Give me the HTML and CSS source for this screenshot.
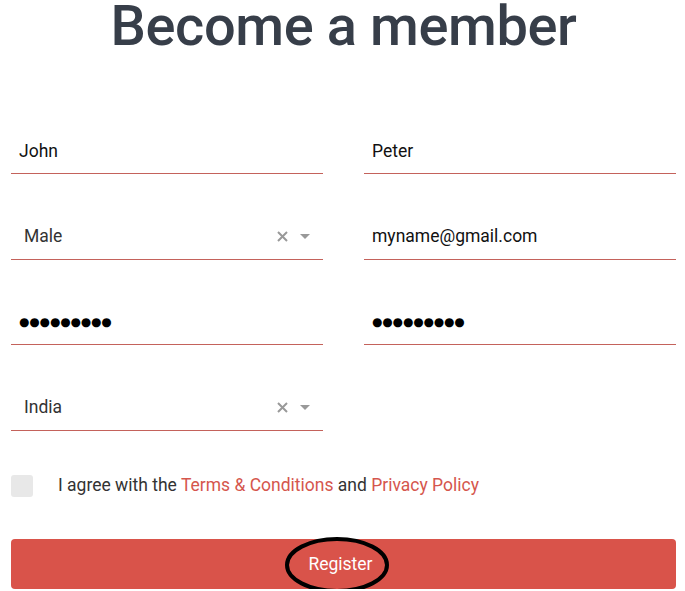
FILE: index.html
```html
<!DOCTYPE html>
<html lang="en">
    <head>
        <meta charset="UTF-8" />
        <meta name="viewport" content="width=device-width, initial-scale=1.0" />
        <title>Become a member</title>
        <link rel="stylesheet" href="styles.css">
    </head>
    <body>
        <div class="container">
            <h1>Become a member</h1>

            <form class="signup">
                <div class="fields">
                    <div class="field">
                        <input type="text" value="John" />
                    </div>
                    <div class="field">
                        <input type="text" value="Peter" />
                    </div>

                    <div class="field select">
                        <span class="select-value">Male</span>
                        <span class="select-clear">
                            <svg width="11" height="11" viewBox="0 0 11 11">
                                <path d="M1 1 L10 10 M10 1 L1 10" />
                            </svg>
                        </span>
                        <span class="select-caret"></span>
                    </div>
                    <div class="field">
                        <input type="email" value="myname@gmail.com" />
                    </div>

                    <div class="field">
                        <input type="text" class="secret" value="●●●●●●●●●" />
                    </div>
                    <div class="field">
                        <input type="text" class="secret" value="●●●●●●●●●" />
                    </div>

                    <div class="field select">
                        <span class="select-value">India</span>
                        <span class="select-clear">
                            <svg width="11" height="11" viewBox="0 0 11 11">
                                <path d="M1 1 L10 10 M10 1 L1 10" />
                            </svg>
                        </span>
                        <span class="select-caret"></span>
                    </div>
                </div>

                <label class="agree">
                    <span class="checkbox"></span>
                    <span class="agree-text">I agree with the <a href="#">Terms &amp; Conditions</a> and <a href="#">Privacy Policy</a></span>
                </label>

                <button type="submit" class="register">
                    <span class="register-label">
                        Register
                        <svg class="circled" width="108" height="60" viewBox="0 0 108 60">
                            <ellipse cx="54" cy="30" rx="50" ry="26" />
                        </svg>
                    </span>
                </button>
            </form>
        </div>
    </body>
</html>
```

FILE: styles.css
```css
* {
    box-sizing: border-box;
}
body {
    font-family: Roboto, "Noto Sans", sans-serif;
    margin: 0;
    background-color: #fff;
    color: #333;
    overflow: hidden;
}
.container {
    margin: 0 9px 0 11px;
}
h1 {
    margin: -2px 0 0;
    font-size: 56px;
    line-height: 56px;
    font-weight: 500;
    letter-spacing: -0.4px;
    text-align: center;
    color: #373e49;
}
.signup {
    margin-top: 76px;
}
.fields {
    display: grid;
    grid-template-columns: 1fr 1fr;
    column-gap: 41px;
    row-gap: 41.5px;
}
.field {
    height: 44px;
    padding-bottom: 2px;
    border-bottom: 1px solid #c4625b;
    display: flex;
    align-items: center;
}
.field input {
    width: 100%;
    border: none;
    outline: none;
    padding: 0 8px;
    font-family: inherit;
    font-size: 17.5px;
    color: #111;
    background: transparent;
}
.field input.secret {
    font-family: "DejaVu Sans", sans-serif;
    font-size: 11.8px;
    color: #000;
}
.select {
    padding: 0 13px 2px;
    font-size: 17.5px;
    color: #333;
}
.select-value {
    flex: 1;
}
.select-clear svg {
    display: block;
    stroke: #999;
    stroke-width: 2;
    fill: none;
}
.select-caret {
    margin-left: 12px;
    width: 0;
    height: 0;
    border-left: 5.5px solid transparent;
    border-right: 5.5px solid transparent;
    border-top: 5px solid #999;
}
.agree {
    margin-top: 44px;
    display: flex;
    align-items: center;
    gap: 25px;
    font-size: 17.5px;
    color: #333;
}
.agree-text {
    padding-bottom: 3px;
}
.checkbox {
    width: 22px;
    height: 22px;
    border-radius: 3px;
    background-color: #e8e8e8;
}
.agree a {
    color: #d5564d;
    text-decoration: none;
}
.register {
    display: block;
    width: 100%;
    height: 50px;
    margin-top: 41px;
    border: none;
    border-radius: 4px;
    background-color: #d9534a;
    color: #fff;
    font-family: inherit;
    font-size: 17.5px;
    cursor: pointer;
}
.register-label {
    position: relative;
    margin-left: -6px;
}
.circled {
    position: absolute;
    left: -25px;
    top: -19px;
    fill: none;
    stroke: #000;
    stroke-width: 4;
}
```
